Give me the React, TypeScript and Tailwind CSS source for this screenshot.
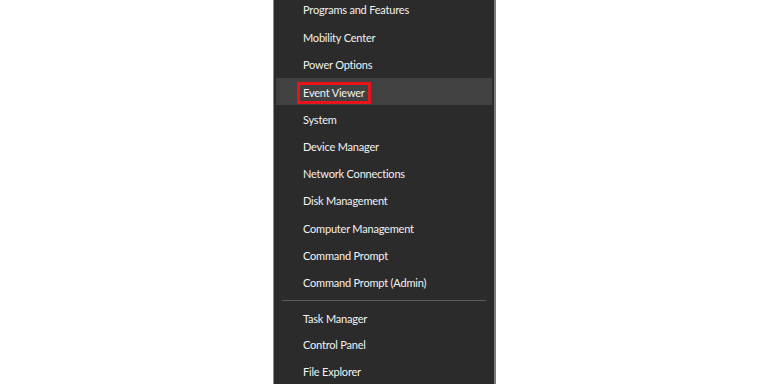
import React from 'react';

const topItems = [
  'Programs and Features',
  'Mobility Center',
  'Power Options',
  'Event Viewer',
  'System',
  'Device Manager',
  'Network Connections',
  'Disk Management',
  'Computer Management',
  'Command Prompt',
  'Command Prompt (Admin)',
];

const bottomItems = ['Task Manager', 'Control Panel', 'File Explorer'];

const MenuItem: React.FC<{ label: string; active?: boolean }> = ({ label, active }) => (
  <div className={`h-[27.3px] flex items-center mx-[2px] ${active ? 'bg-[#414141]' : ''}`}>
    {active ? (
      <span className="ml-[21px] mt-[2px] border-[3px] border-[#e8141c] px-[3px] leading-[16px]">{label}</span>
    ) : (
      <span className="ml-[27px] mt-[2px]">{label}</span>
    )}
  </div>
);

export default function App() {
  return (
    <div className="w-[768px] h-[384px] bg-white overflow-hidden flex justify-start">
      <div
        className="ml-[273px] w-[223px] h-full bg-[#2b2b2b] border-l border-l-[#8a8a8a] border-r-2 border-r-[#7a7a7a] text-[#f2f2f2] text-[11px] tracking-[-0.2px] flex flex-col"
        style={{ fontFamily: 'Lato, "Noto Sans", sans-serif' }}
      >
        <div className="-mt-[4px]">
          {topItems.map((label) => (
            <MenuItem key={label} label={label} active={label === 'Event Viewer'} />
          ))}
        </div>
        <div className="h-[9px] flex items-center px-[8px]">
          <div className="h-px w-full bg-[#5c5c5c]" />
        </div>
        {bottomItems.map((label) => (
          <MenuItem key={label} label={label} />
        ))}
      </div>
    </div>
  );
}
